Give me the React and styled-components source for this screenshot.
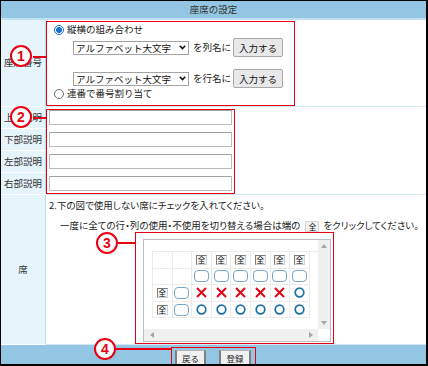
import React from "react";
import styled, { createGlobalStyle } from "styled-components";

const Global = createGlobalStyle`
  html, body { margin: 0; padding: 0; background: #fff; }
  body { font-family: "Noto Sans CJK JP", "Noto Sans", sans-serif; color: #333; }
  *, *::before, *::after { box-sizing: border-box; }
`;

const RED = "#e60012";

const Frame = styled.div`
  width: 428px;
  height: 366px;
  border-style: solid;
  border-color: #000;
  border-width: 1px 2px 2px 1px;
  overflow: hidden;
  display: flex;
  flex-direction: column;
  background: #fff;
  font-size: 9.5px;
  line-height: 1;
`;

const Header = styled.div`
  flex: none;
  height: 19px;
  background: #92c6e2;
  border-bottom: 2px solid #c0e1f2;
  display: flex;
  align-items: center;
  justify-content: center;
  color: #333;
  font-size: 9.5px;
`;

const Body = styled.div`
  flex: none;
  display: grid;
  grid-template-columns: 45px 1fr;
`;

const Label = styled.div`
  height: ${(p) => p.$h}px;
  background: #e6f4fc;
  border-right: 1px solid #b7dbef;
  border-bottom: 1px solid #fff;
  display: flex;
  align-items: center;
  justify-content: center;
  white-space: nowrap;
  color: #333;
`;

const Cell = styled.div`
  grid-row: span ${(p) => p.$span || 1};
  border-bottom: 1px solid #d2e8f5;
  min-width: 0;
  padding-top: ${(p) => p.$pt || 0}px;
`;

const Annot = styled.div`
  position: relative;
  border: 1px solid ${RED};
`;

const Badge = styled.span`
  position: absolute;
  left: ${(p) => p.$x}px;
  top: ${(p) => p.$y}px;
  width: 22px;
  height: 22px;
  border-radius: 50%;
  border: 2px solid ${RED};
  background: #fff;
  color: ${RED};
  font: bold 14px/18px "Liberation Sans", Arial, sans-serif;
  text-align: center;
  z-index: 3;
`;

const Leader = styled.span`
  position: absolute;
  left: ${(p) => p.$x}px;
  top: ${(p) => p.$y}px;
  width: ${(p) => p.$w}px;
  height: 2px;
  background: ${RED};
  z-index: 2;
`;

/* ---- row 1 ---- */
const OptionsBox = styled(Annot)`
  margin-top: 1px;
  width: 249px;
  height: 85px;
  padding: 0 0 0 7px;
`;

const RadioLine = styled.div`
  height: ${(p) => p.$h}px;
  display: flex;
  align-items: center;
  gap: 3px;
  color: #222;
`;

const Radio = styled.span`
  flex: none;
  width: 10px;
  height: 10px;
  border-radius: 50%;
  border: 1px solid ${(p) => (p.$on ? "#1a6fd1" : "#707070")};
  background: ${(p) =>
    p.$on ? "radial-gradient(circle, #1a6fd1 0 2.7px, #fff 3.2px)" : "#fff"};
`;

const PickRow = styled.div`
  height: 19px;
  padding-left: 19px;
  display: flex;
  align-items: center;
  color: #222;
`;

const Spacer = styled.div`
  height: ${(p) => p.$h}px;
`;

const SelectWrap = styled.span`
  position: relative;
  display: inline-flex;
  margin-right: 4px;
`;

const Select = styled.select`
  appearance: none;
  width: 116px;
  height: 14px;
  border: 1px solid #a3a3a3;
  border-radius: 0;
  background: #fff;
  color: #111;
  font-family: inherit;
  font-size: 9.5px;
  line-height: 12px;
  padding: 0 0 0 2px;
  margin: 0;
`;

const Chevron = styled.svg`
  position: absolute;
  right: 3px;
  top: 4px;
  pointer-events: none;
`;

const SmallBtn = styled.button`
  width: 50px;
  height: 19px;
  margin-left: 2px;
  padding: 0;
  background: #e8e8e8;
  border: 1px solid #a8a8a8;
  border-radius: 2px;
  font-family: inherit;
  font-size: 9.5px;
  color: #111;
`;

/* ---- rows 2-5 ---- */
const InputsBox = styled(Annot)`
  margin-top: 2px;
  width: 189px;
  height: 85px;
  padding: 0 2px;
  display: flex;
  flex-direction: column;
  gap: 7px;
`;

const TextInput = styled.input`
  width: 183px;
  height: 15px;
  margin: 0;
  padding: 0 2px;
  border: 1px solid #bcbcbc;
  border-top-color: #a2a2a2;
  background: #fff;
`;

/* ---- row 6 ---- */
const Note = styled.div`
  padding-left: ${(p) => p.$pl}px;
  margin-top: ${(p) => p.$mt || 0}px;
  height: ${(p) => p.$h}px;
  line-height: ${(p) => p.$h}px;
  white-space: nowrap;
  font-feature-settings: "palt";
  color: #222;
`;

const AllIcon = styled.span`
  display: inline-block;
  width: 14px;
  height: 11px;
  margin: 0 4px 0 5px;
  border: 1px solid #d6d6d6;
  background: #f2f2f2;
  font-size: 7.5px;
  line-height: 9px;
  text-align: center;
  vertical-align: middle;
  color: #111;
`;

const GridBox = styled(Annot)`
  margin-left: 89px;
  width: 199px;
  height: 112px;
  padding: 6px 2px 1px 7px;
`;

const Scroller = styled.div`
  width: 188px;
  height: 103px;
  border: 1px solid #bdbdbd;
  display: grid;
  grid-template-columns: 1fr 12px;
  grid-template-rows: 1fr 12px;
  background: #fff;
`;

const ScrollContent = styled.div`
  padding: 11px 0 0 8px;
  overflow: hidden;
`;

const VBar = styled.div`
  background: #f0f0f0;
  display: flex;
  flex-direction: column;
  justify-content: space-between;
  align-items: center;
  padding: 4px 0;
`;

const HBar = styled.div`
  background: #f0f0f0;
  display: flex;
  justify-content: space-between;
  align-items: center;
  padding: 0 5px 0 6px;
`;

const Corner = styled.div`
  background: #fff;
`;

const SeatGrid = styled.div`
  display: grid;
  grid-template-columns: repeat(8, 19.6px);
  grid-template-rows: repeat(4, 16.6px);
  border-left: 1px solid #ececec;
  border-top: 1px solid #ececec;
`;

const SeatCell = styled.div`
  border-right: 1px solid #ececec;
  border-bottom: 1px solid #ececec;
  display: flex;
  align-items: center;
  justify-content: center;
`;

const AllBtn = styled.span`
  width: 11px;
  height: 10px;
  border: 1px solid;
  border-color: #7d7d7d #d0d0d0 #d0d0d0 #7d7d7d;
  background: #f3f3f3;
  font-size: 7.5px;
  line-height: 8px;
  text-align: center;
  color: #111;
`;

const Check = styled.span`
  width: 15px;
  height: 12px;
  border: 1.5px solid #73a8c9;
  border-radius: 4px;
  background: #fff;
`;

/* ---- footer ---- */
const Footer = styled.div`
  flex: 1;
  background: #92c6e2;
  display: flex;
  justify-content: center;
  align-items: flex-start;
`;

const ButtonsBox = styled(Annot)`
  margin-top: 2px;
  width: 85px;
  height: 24px;
  padding: 2px 4px 0 3px;
  display: flex;
  align-items: flex-start;
  gap: 13px;
`;

const FootBtn = styled.button`
  width: ${(p) => p.$w}px;
  height: 15px;
  padding: 0;
  margin: 0;
  background: #f1f1f1;
  border: 1px solid #b4b4b4;
  border-left: 2px solid #7f7f7f;
  border-right: 2px solid #7f7f7f;
  border-radius: 0;
  font-family: inherit;
  font-size: 8.5px;
  line-height: 10px;
  color: #222;
  text-align: center;
`;

const Cross = () => (
  <svg width="11" height="11" viewBox="0 0 11 11">
    <path d="M1 1 L10 10 M10 1 L1 10" stroke="#e60012" strokeWidth="1.9" />
  </svg>
);

const Ring = () => (
  <svg width="11" height="11" viewBox="0 0 11 11">
    <circle cx="5.5" cy="5.5" r="4.3" fill="none" stroke="#1d6fa5" strokeWidth="1.7" />
  </svg>
);

const Tri = ({ dir }) => {
  const pts = {
    up: "0,4 3,0 6,4",
    down: "0,0 6,0 3,4",
    left: "4,0 4,6 0,3",
    right: "0,0 0,6 4,3",
  }[dir];
  const w = dir === "up" || dir === "down" ? 6 : 4;
  const h = dir === "up" || dir === "down" ? 4 : 6;
  return (
    <svg width={w} height={h} viewBox={`0 0 ${w} ${h}`}>
      <polygon points={pts} fill="#a6a6a6" />
    </svg>
  );
};

const Pick = ({ label }) => (
  <PickRow>
    <SelectWrap>
      <Select defaultValue="A">
        <option value="A">アルファベット大文字</option>
      </Select>
      <Chevron width="7" height="5" viewBox="0 0 7 5">
        <polyline points="0.8,0.8 3.5,3.6 6.2,0.8" fill="none" stroke="#111" strokeWidth="1.6" />
      </Chevron>
    </SelectWrap>
    {label}
    <SmallBtn>入力する</SmallBtn>
  </PickRow>
);

const rows = [
  ["", "", "all", "all", "all", "all", "all", "all"],
  ["", "", "chk", "chk", "chk", "chk", "chk", "chk"],
  ["all", "chk", "x", "x", "x", "x", "x", "o"],
  ["all", "chk", "o", "o", "o", "o", "o", "o"],
];

const renderSeat = (k) => {
  if (k === "all") return <AllBtn>全</AllBtn>;
  if (k === "chk") return <Check />;
  if (k === "x") return <Cross />;
  if (k === "o") return <Ring />;
  return null;
};

export default function App() {
  return (
    <>
      <Global />
      <Frame>
        <Header>座席の設定</Header>
        <Body>
          <Label $h={87}>座席番号</Label>
          <Cell>
            <OptionsBox>
              <Badge $x={-37} $y={23}>1</Badge>
              <Leader $x={-14} $y={34} $w={14} />
              <RadioLine $h={16}>
                <Radio $on />
                縦横の組み合わせ
              </RadioLine>
              <Pick label="を列名に" />
              <Spacer $h={12} />
              <Pick label="を行名に" />
              <RadioLine $h={12}>
                <Radio />
                連番で番号割り当て
              </RadioLine>
            </OptionsBox>
          </Cell>

          <Label $h={22}>上部説明</Label>
          <Cell $span={4}>
            <InputsBox>
              <Badge $x={-37} $y={-4}>2</Badge>
              <Leader $x={-14} $y={7} $w={14} />
              <TextInput />
              <TextInput />
              <TextInput />
              <TextInput />
            </InputsBox>
          </Cell>
          <Label $h={22}>下部説明</Label>
          <Label $h={22}>左部説明</Label>
          <Label $h={22}>右部説明</Label>

          <Label $h={150}>席</Label>
          <Cell $pt={3}>
            <Note $pl={3} $h={14}>2.下の図で使用しない席にチェックを入れてください。</Note>
            <Note $pl={14} $h={13} $mt={7}>
              一度に全ての行・列の使用・不使用を切り替える場合は端の<AllIcon>全</AllIcon>をクリックしてください。
            </Note>
            <GridBox>
              <Badge $x={-40} $y={-1}>3</Badge>
              <Leader $x={-18} $y={9} $w={18} />
              <Scroller>
                <ScrollContent>
                  <SeatGrid>
                    {rows.map((r, ri) =>
                      r.map((k, ci) => <SeatCell key={`${ri}-${ci}`}>{renderSeat(k)}</SeatCell>)
                    )}
                  </SeatGrid>
                </ScrollContent>
                <VBar>
                  <Tri dir="up" />
                  <Tri dir="down" />
                </VBar>
                <HBar>
                  <Tri dir="left" />
                  <Tri dir="right" />
                </HBar>
                <Corner />
              </Scroller>
            </GridBox>
          </Cell>
        </Body>
        <Footer>
          <ButtonsBox>
            <Badge $x={-78} $y={-10}>4</Badge>
            <Leader $x={-56} $y={0} $w={56} />
            <FootBtn $w={31}>戻る</FootBtn>
            <FootBtn $w={32}>登録</FootBtn>
          </ButtonsBox>
        </Footer>
      </Frame>
    </>
  );
}
